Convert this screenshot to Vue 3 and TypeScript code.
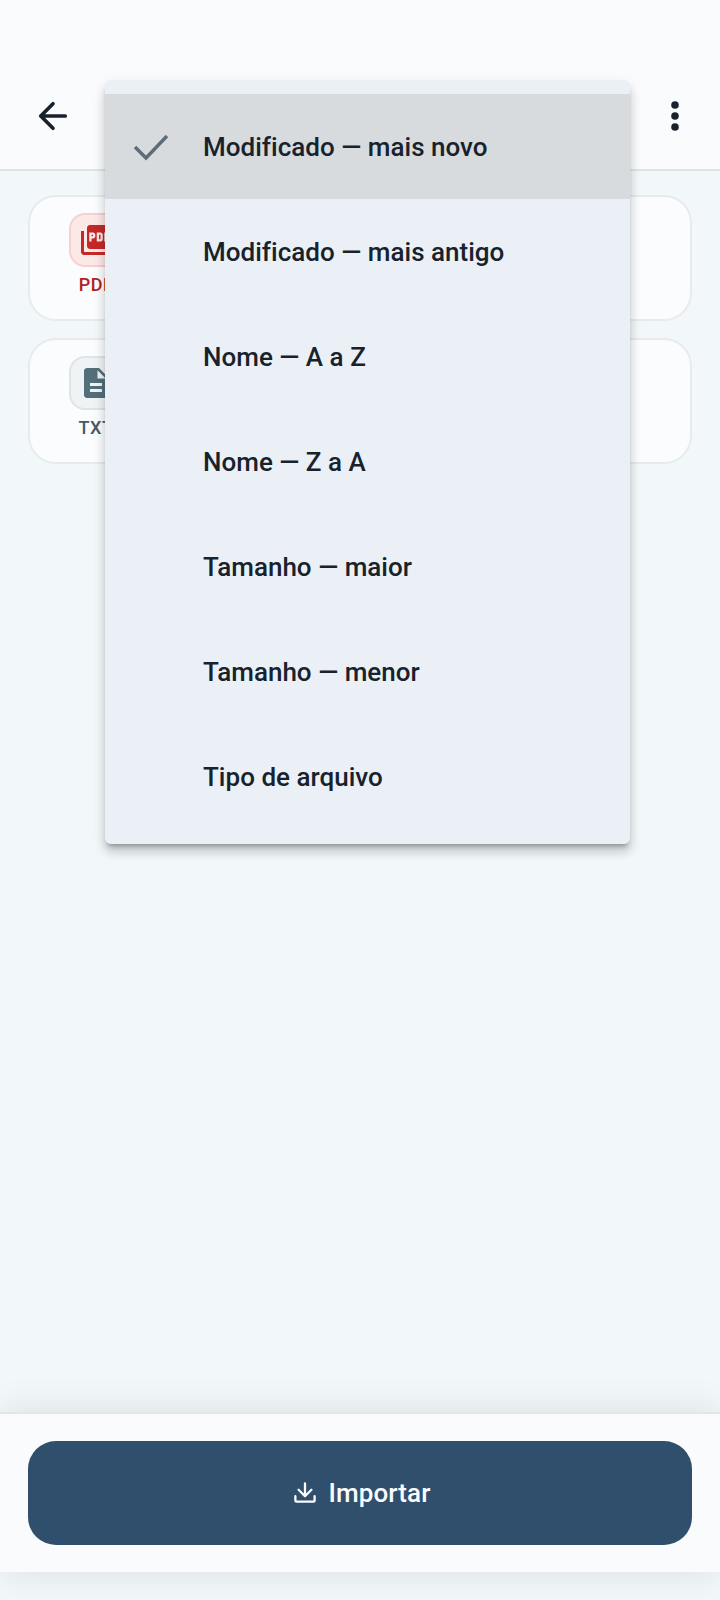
<script setup lang="ts">
const options: string[] = [
  'Modificado — mais novo',
  'Modificado — mais antigo',
  'Nome — A a Z',
  'Nome — Z a A',
  'Tamanho — maior',
  'Tamanho — menor',
  'Tipo de arquivo',
]
</script>

<template>
  <div class="page">
    <header class="bar">
      <svg class="back" viewBox="0 0 24 24" fill="none" stroke="currentColor" stroke-width="2.1" stroke-linecap="round" stroke-linejoin="round">
        <path d="M19 12H5M12 5l-7 7 7 7" />
      </svg>
      <svg class="more" viewBox="0 0 24 42" fill="currentColor">
        <circle cx="12" cy="10" r="3.8" />
        <circle cx="12" cy="21" r="3.8" />
        <circle cx="12" cy="32" r="3.8" />
      </svg>
    </header>

    <main class="list">
      <section class="card">
        <div class="file">
          <div class="tile tile-pdf">
            <svg viewBox="0 0 24 24" fill="currentColor">
              <path d="M20 2H8c-1.1 0-2 .9-2 2v12c0 1.1.9 2 2 2h12c1.1 0 2-.9 2-2V4c0-1.1-.9-2-2-2zm-8.5 7.5c0 .83-.67 1.5-1.5 1.5H9v2H7.5V7H10c.83 0 1.5.67 1.5 1.5v1zm5 2c0 .83-.67 1.5-1.5 1.5h-2.5V7H15c.83 0 1.5.67 1.5 1.5v3zm4-3H19v1h1.5V11H19v2h-1.5V7h3v1.5zM9 9.5h1v-1H9v1zM4 6H2v14c0 1.1.9 2 2 2h14v-2H4V6zm10 5.5h1v-3h-1v3z" />
            </svg>
          </div>
          <span class="label label-pdf">PDF</span>
        </div>
      </section>
      <section class="card">
        <div class="file">
          <div class="tile tile-txt">
            <svg viewBox="0 0 24 24" fill="currentColor">
              <path d="M14 2H6c-1.1 0-2 .9-2 2v16c0 1.1.9 2 2 2h12c1.1 0 2-.89 2-2V8l-6-6zm2 16H8v-2h8v2zm0-4H8v-2h8v2zm-3-5V3.5L18.5 9H13z" />
            </svg>
          </div>
          <span class="label label-txt">TXT</span>
        </div>
      </section>
    </main>

    <footer class="foot">
      <button class="import" type="button">
        <svg viewBox="0 0 24 24" fill="none" stroke="currentColor" stroke-width="2.5" stroke-linecap="round" stroke-linejoin="round">
          <path d="M12 1.5V15M5 8.5l7 7 7-7M1.5 15.5v4.5c0 1 .6 1.5 1.5 1.5h18c.9 0 1.5-.5 1.5-1.5v-4.5" />
        </svg>
        <span>Importar</span>
      </button>
    </footer>

    <div class="menu">
      <div v-for="(option, i) in options" :key="option" class="item" :class="{ selected: i === 0 }">
        <span class="tick">
          <svg v-if="i === 0" viewBox="0 0 36 28" fill="none" stroke="currentColor" stroke-width="3.4">
            <path d="M2 14l11 11L34 3" />
          </svg>
        </span>
        <span class="text">{{ option }}</span>
      </div>
    </div>
  </div>
</template>

<style>
html,
body {
  margin: 0;
  background: #f2f7fa;
}
</style>

<style scoped>
.page {
  position: relative;
  width: 720px;
  height: 1600px;
  display: flex;
  flex-direction: column;
  overflow: hidden;
  background: #f2f7fa;
  font-family: Roboto, "Noto Sans", sans-serif;
  color: #18222d;
}
.bar {
  box-sizing: border-box;
  height: 171px;
  padding: 64px 33px 1px 32px;
  display: flex;
  align-items: center;
  justify-content: space-between;
  background: #fafbfd;
  border-bottom: 2px solid #dfe3e7;
}
.back {
  width: 42px;
  height: 42px;
}
.more {
  width: 24px;
  height: 42px;
}
.list {
  flex: 1;
  padding: 24px 28px 0;
  display: flex;
  flex-direction: column;
  gap: 17px;
}
.card {
  box-sizing: border-box;
  height: 126px;
  padding: 16px 39px;
  background: #fafcfe;
  border: 2px solid #e7ebee;
  border-radius: 28px;
}
.file {
  width: 54px;
  display: flex;
  flex-direction: column;
  align-items: center;
}
.tile {
  box-sizing: border-box;
  width: 54px;
  height: 54px;
  display: flex;
  align-items: center;
  justify-content: center;
  border-radius: 16px;
  border: 2px solid;
}
.tile svg {
  width: 36px;
  height: 36px;
  flex: none;
}
.tile-pdf {
  background: #fde8e8;
  border-color: #f8cfcf;
  color: #c62828;
}
.tile-txt {
  background: #f0f3f5;
  border-color: #dfe4e7;
  color: #546e7a;
}
.label {
  margin-top: 7px;
  font-size: 18px;
  line-height: 22px;
  font-weight: 500;
  letter-spacing: 0.5px;
}
.label-pdf {
  color: #b01f1f;
}
.label-txt {
  color: #455a64;
}
.foot {
  box-sizing: border-box;
  height: 160px;
  margin-bottom: 28px;
  padding: 27px 28px 0;
  background: #fafbfd;
  border-top: 2px solid #e3e6e9;
  box-shadow: 0 0 36px rgba(0, 0, 0, 0.1);
}
.import {
  box-sizing: border-box;
  width: 664px;
  height: 104px;
  padding: 0 0 0 4px;
  display: flex;
  align-items: center;
  justify-content: center;
  gap: 13px;
  border: none;
  border-radius: 28px;
  background: #2f4f6d;
  color: #fbfcfe;
  font-family: inherit;
  font-size: 26px;
  font-weight: 500;
  letter-spacing: 0.1px;
}
.import svg {
  width: 22px;
  height: 22px;
}
.menu {
  position: absolute;
  left: 105px;
  top: 80px;
  width: 525px;
  padding: 14px 0 15px;
  background: #eaf0f5;
  border-radius: 6px;
  box-shadow: 0 5px 5px -3px rgba(0, 0, 0, 0.3), 0 8px 10px 1px rgba(0, 0, 0, 0.12), 0 5px 14px 1px rgba(0, 0, 0, 0.08);
}
.item {
  height: 105px;
  display: flex;
  align-items: center;
  font-size: 26px;
  font-weight: 500;
  letter-spacing: 0.02px;
}
.selected {
  background: #d7dbde;
}
.tick {
  width: 98px;
  padding-left: 28px;
  box-sizing: border-box;
  flex: none;
  display: flex;
  color: #5f6c78;
}
.tick svg {
  width: 36px;
  height: 28px;
}
.text {
  white-space: nowrap;
}
</style>
